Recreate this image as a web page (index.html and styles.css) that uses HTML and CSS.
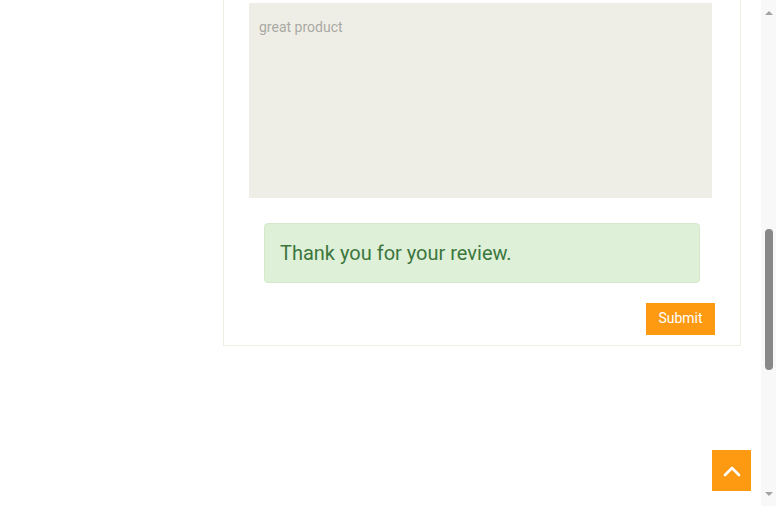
FILE: index.html
```html
<!DOCTYPE html>
<html lang="en">
<head>
<meta charset="utf-8">
<title>Review</title>
<link rel="stylesheet" href="styles.css">
</head>
<body>
<div class="page">
  <main class="viewport">
    <section class="card">
      <div class="textarea">great product</div>
      <div class="alert">Thank you for your review.</div>
      <div class="actions"><button class="submit" type="button">Submit</button></div>
    </section>
    <a class="to-top" href="#" aria-label="Back to top">
      <svg width="18" height="12" viewBox="0 0 18 12"><path d="M2 10 L9 3 L16 10" fill="none" stroke="#fff" stroke-width="2.6" stroke-linecap="round" stroke-linejoin="round"/></svg>
    </a>
  </main>
  <div class="scrollbar">
    <span class="arrow up"></span>
    <div class="track"><div class="thumb"></div></div>
    <span class="arrow down"></span>
  </div>
</div>
</body>
</html>
```
FILE: styles.css
```css
html, body {
  margin: 0;
  padding: 0;
  height: 100%;
  overflow: hidden;
  background: #fff;
  font-family: Roboto, "Liberation Sans", Arial, sans-serif;
}
.page {
  display: flex;
  height: 506px;
}
.viewport {
  flex: 1;
  position: relative;
  overflow: hidden;
}
.card {
  margin: -21px 0 0 223px;
  width: 516px;
  border: 1px solid #efeee4;
  padding: 23px 0 10px 0;
  display: flex;
  flex-direction: column;
}
.textarea {
  margin-left: 25px;
  width: 463px;
  height: 195px;
  background: #efeee6;
  box-sizing: border-box;
  padding: 15px 10px 0 10px;
  color: #a9a9a4;
  font-size: 14px;
  line-height: 18px;
}
.alert {
  margin: 25px 0 0 40px;
  width: 436px;
  height: 60px;
  box-sizing: border-box;
  background: #dff0d8;
  border: 1px solid #d3e9c9;
  border-radius: 4px;
  color: #3c763d;
  font-size: 20px;
  padding: 0 15px;
  display: flex;
  align-items: center;
}
.actions {
  display: flex;
  justify-content: flex-end;
  margin-top: 20px;
  padding-right: 25px;
}
.submit {
  width: 69px;
  height: 32px;
  background: #fe9a12;
  border: 0;
  border-radius: 0;
  color: #fff;
  font-family: Roboto, "Liberation Sans", Arial, sans-serif;
  font-size: 14px;
  line-height: 30px;
  padding: 0 0 2px 0;
  cursor: pointer;
}
.to-top {
  position: absolute;
  left: 712px;
  top: 450px;
  width: 39px;
  height: 41px;
  background: #fe9a12;
  display: flex;
  align-items: center;
  justify-content: center;
}
.scrollbar {
  width: 15px;
  background: #f8f8f8;
  display: flex;
  flex-direction: column;
  align-items: center;
}
.arrow {
  width: 0;
  height: 0;
  border-left: 4px solid transparent;
  border-right: 4px solid transparent;
}
.arrow.up {
  margin-top: 11px;
  border-bottom: 4px solid #a3a3a3;
}
.arrow.down {
  margin-bottom: 10px;
  border-top: 4px solid #a3a3a3;
}
.track {
  flex: 1;
  width: 100%;
  display: flex;
  justify-content: center;
}
.thumb {
  margin-top: 214px;
  width: 8px;
  height: 141px;
  border-radius: 4px;
  background: #888;
}
```
